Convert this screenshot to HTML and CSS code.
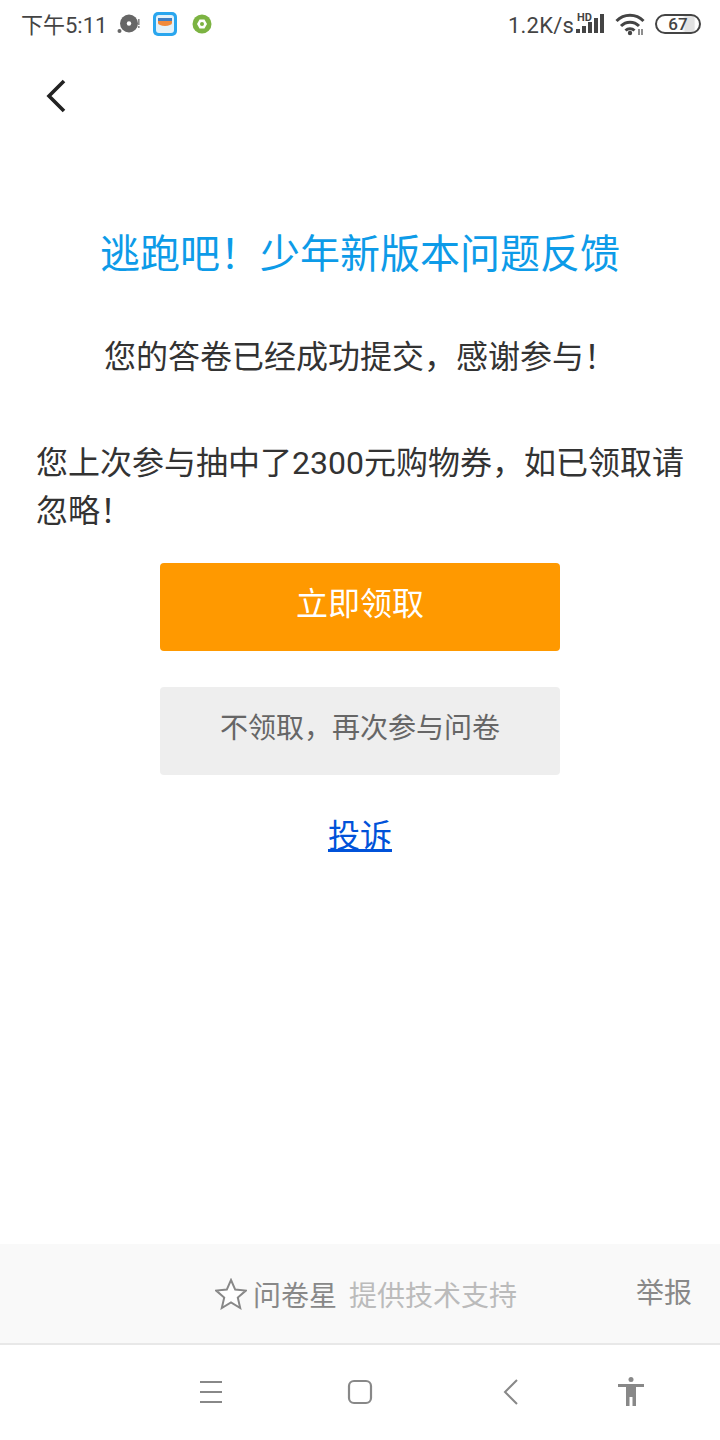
FILE: index.html
```html
<!DOCTYPE html>
<html lang="zh">
<head>
  <meta charset="UTF-8">
  <title>问卷星</title>
  <link rel="stylesheet" href="styles.css">
</head>
<body>
  <div class="page">
    <div class="statusbar">
      <div class="status-left">
        <span class="time">下午5:11</span>
        <svg class="ic-disc" width="24" height="20" viewBox="0 0 24 20">
          <circle cx="12" cy="9.500" r="9" fill="#666"/>
          <circle cx="12" cy="9.500" r="2.200" fill="#fff"/>
          <circle cx="2.500" cy="17" r="2" fill="#666"/>
          <rect x="21" y="5" width="1.600" height="6" fill="#888"/>
          <rect x="21" y="12" width="1.600" height="2" fill="#888"/>
        </svg>
        <svg class="ic-wallet" width="24" height="24" viewBox="0 0 24 24">
          <rect width="24" height="24" rx="5" fill="#2aa6ee"/>
          <rect x="3" y="3" width="18" height="18" rx="3" fill="#e4f2fa"/>
          <path d="M5 6h14v4H5z" fill="#3f7fc4"/>
          <path d="M5 9h14v2a7 3 0 0 1-14 0z" fill="#f08a3c"/>
        </svg>
        <svg class="ic-gear" width="20" height="20" viewBox="0 0 20 20">
          <circle cx="10" cy="10" r="9.500" fill="#7cb342"/>
          <path d="M7.500 5.500h5l2.500 4.500-2.500 4.500h-5L5 10z" fill="#fff"/>
          <circle cx="10" cy="10" r="2" fill="#7cb342"/>
        </svg>
      </div>
      <div class="status-right">
        <span class="speed">1.2K/s</span>
        <div class="signal">
          <span class="hd">HD</span>
          <svg width="30" height="20" viewBox="0 0 30 20">
            <rect x="1" y="15" width="4" height="4" fill="#444"/>
            <rect x="7" y="12" width="4" height="7" fill="#444"/>
            <rect x="13" y="8" width="4" height="11" fill="#444"/>
            <rect x="19" y="4" width="4" height="15" fill="#444"/>
            <rect x="25" y="0" width="4" height="19" fill="#444"/>
          </svg>
        </div>
        <svg class="ic-wifi" width="30" height="24" viewBox="0 0 30 24">
          <path d="M1.500 9A19 19 0 0 1 28.500 9M6 14A12.500 12.500 0 0 1 24 14M10.500 18.500A6.500 6.500 0 0 1 19.500 18.500" fill="none" stroke="#444" stroke-width="3"/>
          <circle cx="15" cy="21" r="2.200" fill="#444"/>
          <path d="M24 17v6M27 17v6" stroke="#444" stroke-width="1.200"/>
        </svg>
        <div class="battery"><span class="battery-num">67</span></div>
      </div>
    </div>

    <div class="topnav">
      <svg width="22" height="34" viewBox="0 0 22 34">
        <path d="M19 2 L4 17 L19 32" fill="none" stroke="#222" stroke-width="3.600"/>
      </svg>
    </div>

    <main class="content">
      <h1 class="survey-title">逃跑吧！少年新版本问题反馈</h1>
      <p class="thanks">您的答卷已经成功提交，感谢参与！</p>
      <p class="prize">您上次参与抽中了2300元购物券，如已领取请忽略！</p>
      <div class="actions">
        <a class="btn btn-primary">立即领取</a>
        <a class="btn btn-gray">不领取，再次参与问卷</a>
        <a class="complain">投诉</a>
      </div>
    </main>

    <footer class="support">
      <div class="support-brand">
        <svg width="32" height="32" viewBox="0 0 32 32">
          <path d="M16 2l4.200 9.600 10.600 1-8 7 2.400 10.400L16 24.500 6.800 30l2.400-10.400-8-7 10.600-1z" fill="#fff" stroke="#888" stroke-width="2"/>
        </svg>
        <span class="brand-name">问卷星</span>
        <span class="brand-note">提供技术支持</span>
      </div>
      <span class="report">举报</span>
    </footer>

    <nav class="navbar">
      <svg class="nav-menu" width="24" height="24" viewBox="0 0 24 24">
        <path d="M1 2h22M1 12h22M1 22h22" stroke="#888" stroke-width="2"/>
      </svg>
      <svg class="nav-home" width="26" height="26" viewBox="0 0 26 26">
        <rect x="2" y="2" width="22" height="22" rx="5" fill="none" stroke="#888" stroke-width="2.200"/>
      </svg>
      <svg class="nav-back" width="16" height="26" viewBox="0 0 16 26">
        <path d="M14 1 L2 13 L14 25" fill="none" stroke="#888" stroke-width="2"/>
      </svg>
      <svg class="nav-access" width="28" height="30" viewBox="0 0 28 30">
        <circle cx="14" cy="2.500" r="2.500" fill="#888"/>
        <path d="M1 7h26v3H19v19h-3.500v-9h-3v9H9V10H1z" fill="#888"/>
      </svg>
    </nav>
  </div>
</body>
</html>
```

FILE: styles.css
```css
* {
  box-sizing: border-box;
}

body {
  margin: 0;
  background: #fff;
  font-family: Roboto, "Noto Sans CJK SC", sans-serif;
}

.page {
  width: 720px;
  height: 1440px;
  display: flex;
  flex-direction: column;
}

/* Status bar */
.statusbar {
  height: 50px;
  display: flex;
  justify-content: space-between;
  align-items: center;
  padding: 0 19px 2px 21px;
  color: #444;
}

.status-left,
.status-right {
  display: flex;
  align-items: center;
}

.time {
  font-size: 22px;
  margin-bottom: 2px;
}

.ic-disc {
  margin-left: 10px;
}

.ic-wallet {
  margin-left: 12px;
}

.ic-gear {
  margin-left: 15px;
}

.speed {
  font-size: 22px;
  letter-spacing: 0.2px;
  margin-top: 2px;
}

.signal {
  position: relative;
  margin-left: 1px;
  display: flex;
}

.hd {
  position: absolute;
  left: 2px;
  top: -3px;
  font-size: 11px;
  font-weight: 700;
}

.ic-wifi {
  margin-left: 10px;
}

.battery {
  width: 46px;
  height: 20px;
  margin-left: 10px;
  border: 2px solid #444;
  border-radius: 10px;
  text-align: center;
  background: linear-gradient(90deg, #fff 60%, #e2e2e2 68%, #e2e2e2 88%, #fff 92%);
}

.battery-num {
  display: block;
  font-size: 17px;
  font-weight: 500;
  line-height: 16px;
}

/* Back */
.topnav {
  height: 92px;
  padding: 29px 0 0 45px;
}

.topnav svg {
  display: block;
}

/* Main */
.content {
  flex: 1;
  padding: 0 32px;
}

.survey-title {
  margin: 91px 0 0;
  font-size: 40px;
  font-weight: 400;
  line-height: 44px;
  color: #0d9be8;
  text-align: center;
}

.thanks {
  margin: 56px 0 0;
  padding-left: 72px;
  font-size: 32px;
  line-height: 48px;
  color: #333;
}

.prize {
  margin: 58px 0 0;
  padding-left: 4px;
  font-size: 32px;
  line-height: 48px;
  color: #333;
}

.actions {
  margin-top: 28px;
  display: flex;
  flex-direction: column;
  align-items: center;
}

.btn {
  width: 400px;
  height: 88px;
  border-radius: 4px;
  display: flex;
  justify-content: center;
  align-items: center;
  padding-bottom: 13px;
}

.btn-primary {
  background: #ff9900;
  color: #fff;
  font-size: 32px;
}

.btn-gray {
  margin-top: 36px;
  background: #eeeeee;
  color: #666;
  font-size: 28px;
  padding-bottom: 11px;
}

.complain {
  margin-top: 38px;
  font-size: 32px;
  line-height: 46px;
  color: #0052d9;
  text-decoration: underline;
}

/* Footer */
.support {
  position: relative;
  height: 101px;
  background: #f9f9f9;
  border-bottom: 2px solid #e8e8e8;
  display: flex;
  justify-content: center;
  align-items: center;
}

.support-brand {
  display: flex;
  align-items: center;
  padding-left: 12px;
}

.brand-name {
  margin-left: 6px;
  font-size: 28px;
  color: #888;
}

.brand-note {
  margin-left: 12px;
  font-size: 28px;
  color: #bbb;
}

.report {
  position: absolute;
  right: 28px;
  top: 27px;
  font-size: 28px;
  color: #888;
}

/* Nav bar */
.navbar {
  height: 95px;
  position: relative;
  display: flex;
  align-items: center;
  padding-bottom: 1px;
}

.nav-menu {
  margin-left: 199px;
}

.nav-home {
  margin-left: 124px;
}

.nav-back {
  margin-left: 130px;
}

.nav-access {
  margin-left: 98px;
}
```
